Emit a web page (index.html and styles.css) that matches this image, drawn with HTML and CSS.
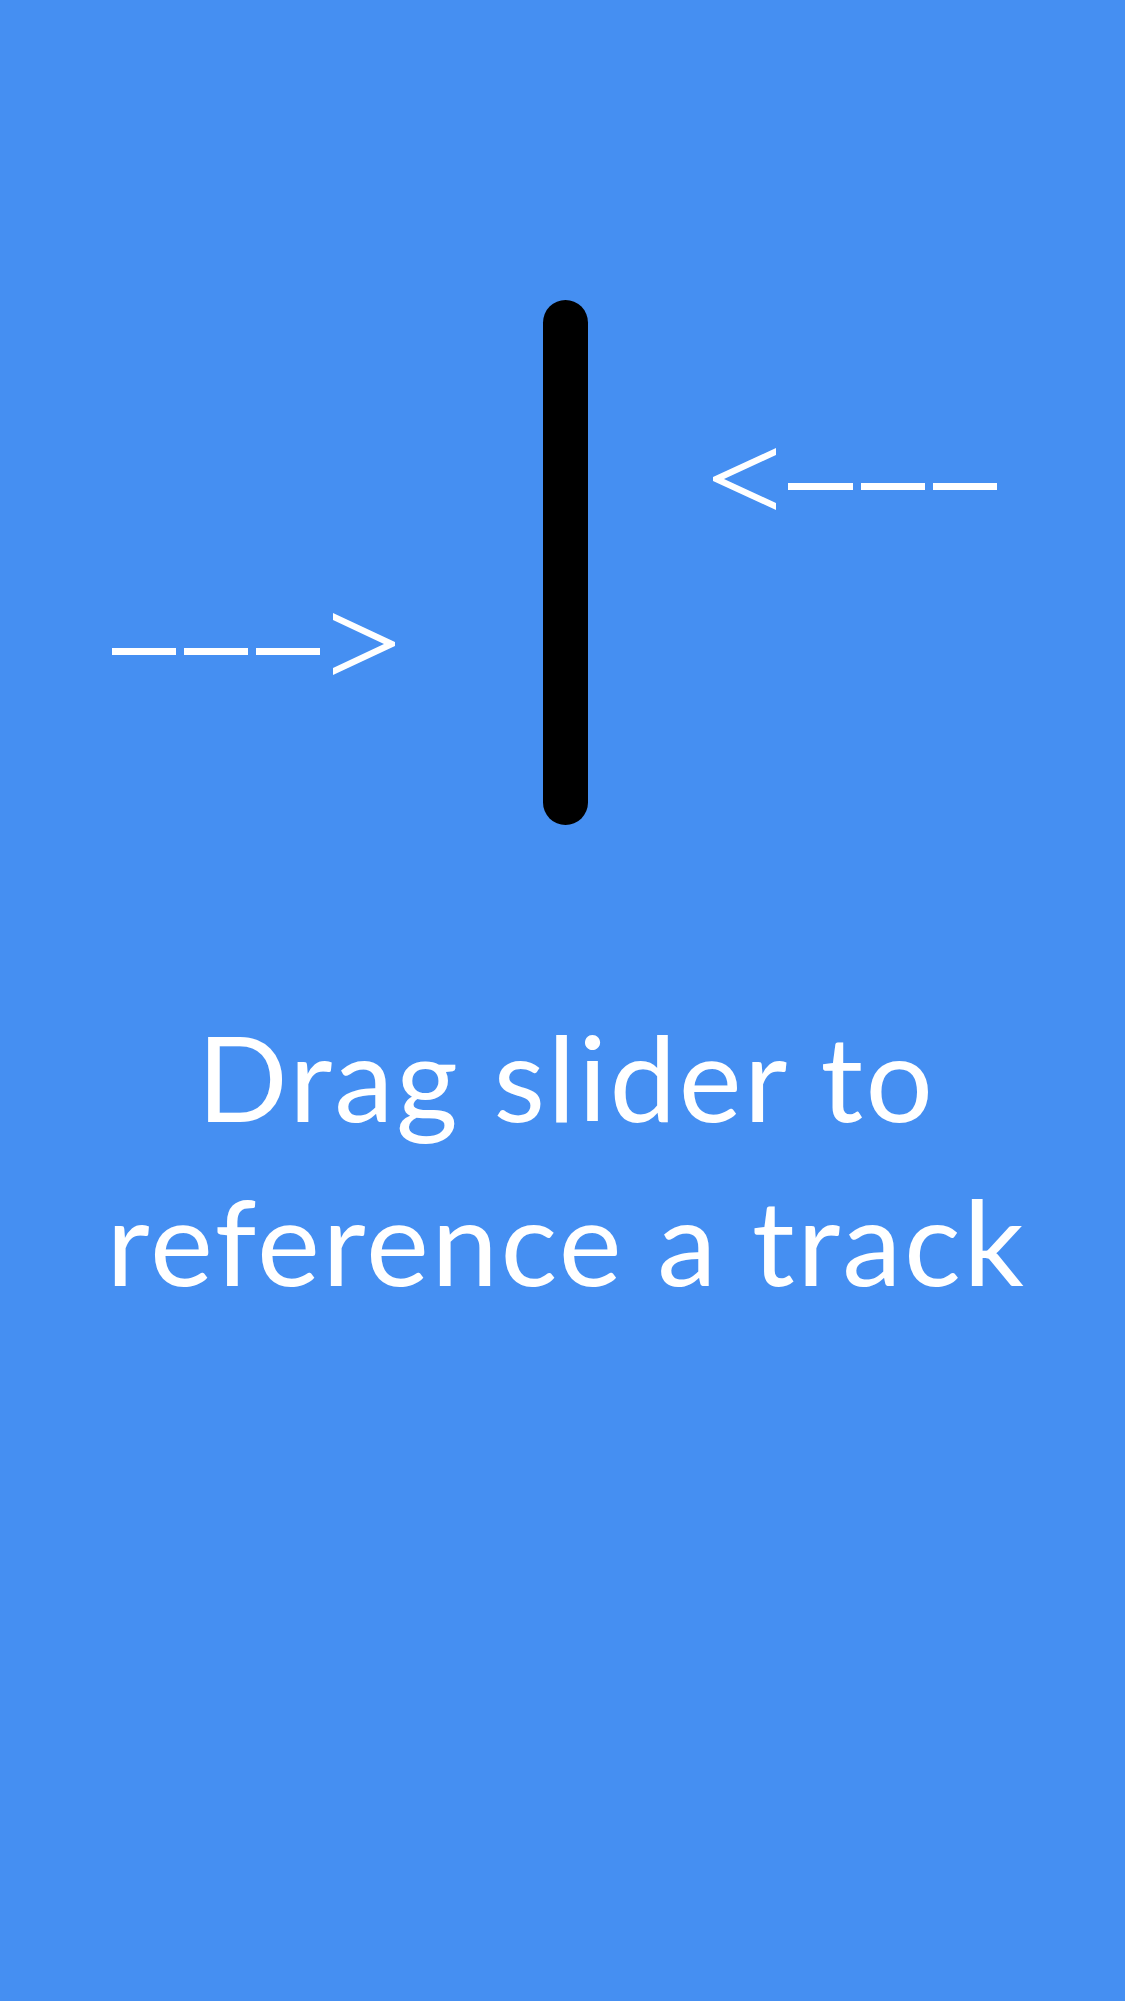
FILE: index.html
```html
<!DOCTYPE html>
<html lang="en">
<head>
<meta charset="utf-8">
<title>Drag slider</title>
<link rel="stylesheet" href="styles.css">
</head>
<body>
<main class="screen">
  <svg class="stage" viewBox="0 0 1125 900" width="1125" height="900" aria-hidden="true">
    <rect class="slider" x="543" y="300" width="45" height="525" rx="22.5" ry="22.5"/>
    <g class="arrow">
      <polygon points="776,448 776,455 724,479 776,503 776,510 713,481 713,477"/>
      <rect x="788" y="483" width="65" height="7"/>
      <rect x="861" y="483" width="64" height="7"/>
      <rect x="933" y="483" width="64" height="7"/>
    </g>
    <g class="arrow">
      <rect x="112" y="648" width="64" height="7"/>
      <rect x="184" y="648" width="64" height="7"/>
      <rect x="256" y="648" width="64" height="7"/>
      <polygon points="333,613 395,642 395,646 333,675 333,668 384,644 333,620"/>
    </g>
  </svg>
  <p class="caption">Drag slider to<br>reference a track</p>
</main>
</body>
</html>
```

FILE: styles.css
```css
html, body {
  margin: 0;
  padding: 0;
}
body {
  background: #458ff2;
  width: 1125px;
  height: 2001px;
  overflow: hidden;
}
.screen {
  display: flex;
  flex-direction: column;
}
.stage {
  display: block;
}
.slider {
  fill: #000;
}
.arrow {
  fill: #fff;
}
.caption {
  margin: 94px 0 0;
  padding-left: 8px;
  font-family: Lato, "Open Sans", sans-serif;
  font-weight: 400;
  font-size: 119px;
  line-height: 164px;
  letter-spacing: 2.6px;
  color: #fff;
  text-align: center;
}
```
